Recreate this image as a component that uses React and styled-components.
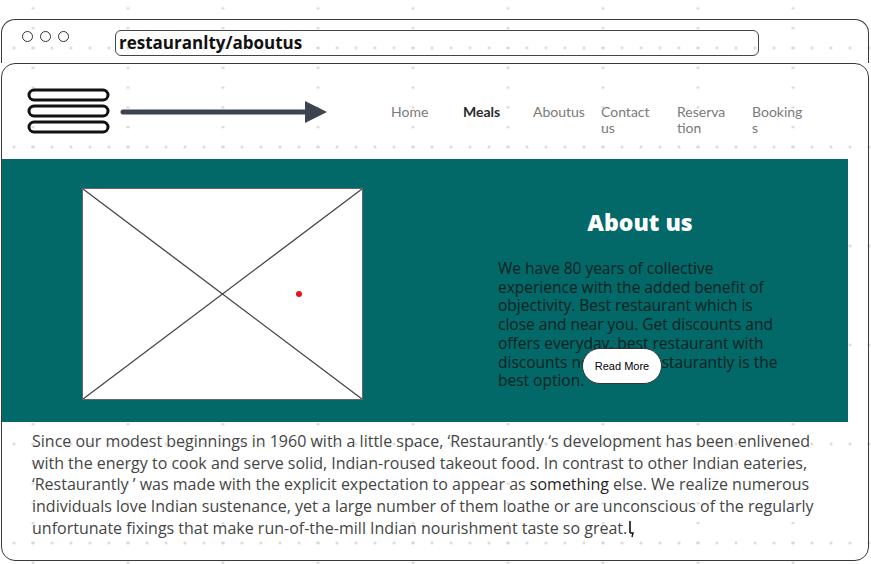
import styled, { createGlobalStyle } from "styled-components";

const GlobalStyle = createGlobalStyle`
  html, body {
    margin: 0;
    padding: 0;
    background-color: #fff;
  }
  body {
    font-family: "Open Sans", "Liberation Sans", sans-serif;
    /* faint wireframe dot grid */
    background-image:
      radial-gradient(circle, #d6d6d6 1px, transparent 1.6px),
      radial-gradient(circle, #d6d6d6 1px, transparent 1.6px);
    background-size: 19px 99px, 95px 19.8px;
    background-position: 4.5px -1.5px, -14.5px 18.3px;
    min-height: 564px;
    overflow: hidden;
  }
`;

const Window = styled.div`
  display: flex;
  flex-direction: column;
  width: 868px;
  height: 542px;
  margin: 19px 0 0 1px;
`;

const TitleBar = styled.div`
  display: flex;
  align-items: flex-start;
  height: 44px;
  box-sizing: border-box;
  padding: 10px 0 0 20px;
  border: 1px solid #3a3a3a;
  border-bottom: none;
  border-radius: 14px 14px 0 0;
`;

const Dots = styled.div`
  display: flex;
  gap: 7px;
  margin-top: 1px;
  width: 93px;
`;

const Dot = styled.span`
  width: 11px;
  height: 11px;
  box-sizing: border-box;
  border: 1.5px solid #333;
  border-radius: 50%;
`;

const UrlBar = styled.div`
  width: 644px;
  height: 26px;
  box-sizing: border-box;
  border: 1.5px solid #444;
  border-radius: 6px;
  padding: 0 3px;
  font-family: "Open Sans", "DejaVu Sans", sans-serif;
  font-weight: 700;
  font-size: 17px;
  line-height: 23px;
  color: #111;
`;

const Page = styled.div`
  flex: 1;
  display: flex;
  flex-direction: column;
  border: 1px solid #3a3a3a;
  border-radius: 14px;
  overflow: hidden;
`;

const NavBar = styled.nav`
  display: flex;
  align-items: center;
  height: 95px;
  padding-left: 25px;
`;

const Brand = styled.div`
  display: flex;
  align-items: center;
  gap: 9px;
  width: 364px;
`;

const NavLinks = styled.ul`
  display: grid;
  grid-template-columns: 72px 70px 68px 76px 75px 60px;
  margin: 0;
  padding: 0;
  list-style: none;
  align-self: flex-start;
  margin-top: 40px;
`;

const NavLink = styled.li`
  max-width: 52px;
  font-family: Lato, "Open Sans", sans-serif;
  font-size: 14px;
  line-height: 16px;
  word-break: break-all;
  color: ${(p) => (p.$active ? "#2b2b2b" : "#7a7a7a")};
  font-weight: ${(p) => (p.$active ? 700 : 400)};
`;

const Hero = styled.section`
  display: flex;
  width: 846px;
  height: 263px;
  box-sizing: border-box;
  background: #026868;
  padding: 29px 0 0 80px;
`;

const Placeholder = styled.div`
  position: relative;
  width: 281px;
  height: 212px;
  box-sizing: border-box;
  background: #fff;
  border: 1px solid #666;
`;

const RedDot = styled.span`
  position: absolute;
  left: 213px;
  top: 102px;
  width: 6px;
  height: 6px;
  border-radius: 50%;
  background: #e8131b;
`;

const HeroText = styled.div`
  position: relative;
  width: 292px;
  margin-left: 135px;
  padding-top: 20px;
`;

const Heading = styled.h2`
  margin: 0 0 23px;
  width: 284px;
  text-align: center;
  font-family: "Open Sans", sans-serif;
  font-weight: 800;
  font-size: 23px;
  line-height: 28px;
  color: #fff;
`;

const HeroPara = styled.p`
  margin: 0;
  font-size: 15.5px;
  line-height: 18.7px;
  color: #0a2222;
`;

const ReadMore = styled.button`
  position: absolute;
  left: 84px;
  top: 160px;
  width: 80px;
  height: 36px;
  border: 1px solid #333;
  border-radius: 18px;
  background: #fff;
  font-family: "Liberation Sans", Arial, sans-serif;
  font-size: 11px;
  color: #000;
  padding: 0;
`;

const Story = styled.p`
  margin: 0;
  padding: 9px 30px 0 30px;
  font-size: 16px;
  line-height: 21.7px;
  color: #454545;
`;

const Strong = styled.span`
  color: #1f1f1f;
`;

const Caret = styled.svg`
  vertical-align: -4px;
  margin-left: 1px;
`;

const Hamburger = () => (
  <svg width="84" height="48" viewBox="0 0 84 48">
    {[2, 18, 34].map((y) => (
      <rect key={y} x="2" y={y} width="79" height="10" rx="5" fill="none" stroke="#111" strokeWidth="3" />
    ))}
  </svg>
);

const Arrow = () => (
  <svg width="210" height="26" viewBox="0 0 210 26">
    <line x1="3" y1="13" x2="190" y2="13" stroke="#3d4451" strokeWidth="5" strokeLinecap="round" />
    <polygon points="185,2 207,13 185,24" fill="#3d4451" />
  </svg>
);

const links = ["Home", "Meals", "Aboutus", "Contact us", "Reservation", "Bookings"];

export default function App() {
  return (
    <>
      <GlobalStyle />
      <Window>
        <TitleBar>
          <Dots>
            <Dot />
            <Dot />
            <Dot />
          </Dots>
          <UrlBar>restauranlty/aboutus</UrlBar>
        </TitleBar>
        <Page>
          <NavBar>
            <Brand>
              <Hamburger />
              <Arrow />
            </Brand>
            <NavLinks>
              {links.map((l) => (
                <NavLink key={l} $active={l === "Meals"}>
                  {l}
                </NavLink>
              ))}
            </NavLinks>
          </NavBar>
          <Hero>
            <Placeholder>
              <svg width="279" height="210" viewBox="0 0 279 210" style={{ display: "block" }}>
                <line x1="0" y1="0" x2="279" y2="210" stroke="#444" strokeWidth="1.3" />
                <line x1="279" y1="0" x2="0" y2="210" stroke="#444" strokeWidth="1.3" />
              </svg>
              <RedDot />
            </Placeholder>
            <HeroText>
              <Heading>About us</Heading>
              <HeroPara>
                We have 80 years of collective experience with the added benefit of objectivity. Best
                restaurant which is close and near you. Get discounts and offers everyday, best
                restaurant with discounts near you. Restaurantly is the best option.
              </HeroPara>
              <ReadMore>Read More</ReadMore>
            </HeroText>
          </Hero>
          <Story>
            Since our modest beginnings in 1960 with a little space, ‘Restaurantly ‘s development has
            been enlivened with the energy to cook and serve solid, Indian-roused takeout food. In
            contrast to other Indian eateries, ‘Restaurantly ’ was made with the explicit expectation
            to appear as <Strong>something</Strong> else. We realize numerous individuals love Indian
            sustenance, yet a large number of them loathe or are unconscious of the regularly
            unfortunate fixings that make run-of-the-mill Indian nourishment taste so great.
            <Caret width="8" height="18" viewBox="0 0 8 18">
              <path d="M2 1 V13" stroke="#111" strokeWidth="1.6" fill="none" />
              <path d="M2 13 H5 L4 17" stroke="#111" strokeWidth="1.4" fill="none" />
            </Caret>
          </Story>
        </Page>
      </Window>
    </>
  );
}
